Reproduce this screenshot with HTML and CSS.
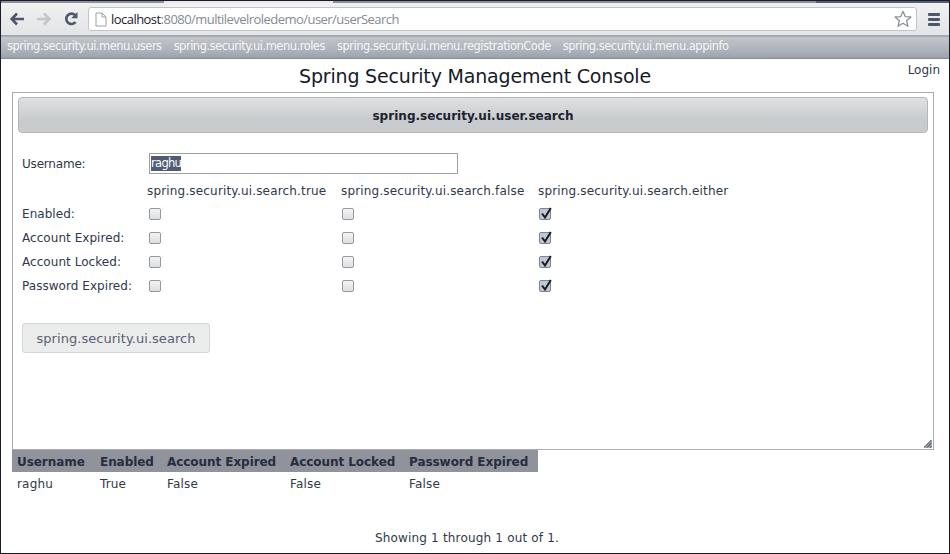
FILE: index.html
```html
<!DOCTYPE html>
<html lang="en">
<head>
<meta charset="utf-8">
<title>Spring Security Management Console</title>
<link rel="stylesheet" href="styles.css">
</head>
<body>
<div class="window">
  <div class="tabstrip"><span class="tab-a"></span><span class="tab-b"></span><span class="tab-c"></span></div>
  <div class="toolbar">
    <svg class="nav" width="76" height="18" viewBox="0 0 76 18" fill="none" stroke-width="2.6">
      <path d="M16 9H4M9 3.500L3.700 9l5.300 5.500" stroke="#4d566b"/>
      <path d="M29 9h12M36 3.500L41.300 9l-5.300 5.500" stroke="#c3c6c9"/>
      <path d="M67.500 12.200A5.200 5.200 0 1 1 67 5" stroke="#4d566b"/>
      <path d="M69.500 2v6.300h-6.300z" fill="#4d566b"/>
    </svg>
    <div class="address">
      <svg width="12" height="15" viewBox="0 0 12 15" fill="#fff" stroke="#9a9fa7"><path d="M1 1h6l4 4v9H1zM7 1v4h4"/></svg>
      <span class="url"><b>localhost</b>:8080/multilevelroledemo/user/userSearch</span>
      <svg class="star" width="18" height="18" viewBox="0 0 18 18" fill="#fff" stroke="#8b919b" stroke-width="1.300" stroke-linejoin="round"><path d="M9 1.300l2.200 5.300 5.700.4-4.300 3.700 1.400 5.600L9 13.300l-5 3 1.400-5.600L1.100 7l5.700-.4z"/></svg>
    </div>
    <div class="burger"><i></i><i></i><i></i></div>
  </div>
  <nav class="menu">
    <span>spring.security.ui.menu.users</span>
    <span>spring.security.ui.menu.roles</span>
    <span>spring.security.ui.menu.registrationCode</span>
    <span>spring.security.ui.menu.appinfo</span>
  </nav>
  <header class="heading">
    <h1>Spring Security Management Console</h1>
    <span class="login">Login</span>
  </header>
  <main class="panel">
    <h2>spring.security.ui.user.search</h2>
    <div class="form">
      <div class="row user"><label>Username:</label><div class="field"><span>raghu</span></div></div>
      <div class="row names"><span></span><span>spring.security.ui.search.true</span><span>spring.security.ui.search.false</span><span>spring.security.ui.search.either</span></div>
      <div class="row"><label>Enabled:</label><i class="box"></i><i class="box"></i><i class="box on"><svg width="14" height="14" viewBox="0 0 14 14"><path d="M3 6.500l3 4L11.800 1"/></svg></i></div>
      <div class="row"><label>Account Expired:</label><i class="box"></i><i class="box"></i><i class="box on"><svg width="14" height="14" viewBox="0 0 14 14"><path d="M3 6.500l3 4L11.800 1"/></svg></i></div>
      <div class="row"><label>Account Locked:</label><i class="box"></i><i class="box"></i><i class="box on"><svg width="14" height="14" viewBox="0 0 14 14"><path d="M3 6.500l3 4L11.800 1"/></svg></i></div>
      <div class="row"><label>Password Expired:</label><i class="box"></i><i class="box"></i><i class="box on"><svg width="14" height="14" viewBox="0 0 14 14"><path d="M3 6.500l3 4L11.800 1"/></svg></i></div>
    </div>
    <button class="search">spring.security.ui.search</button>
    <svg class="grip" width="8" height="8" viewBox="0 0 8 8"><path d="M0 8L8 0V8z" fill="#b4b8bf"/><path d="M0 7.500L7.500 0M3 7.500L7.500 3M6 7.500L7.500 6" stroke="#596070" stroke-width="1.100"/></svg>
  </main>
  <div class="results">
    <div class="cols head"><span>Username</span><span>Enabled</span><span>Account Expired</span><span>Account Locked</span><span>Password Expired</span></div>
    <div class="cols"><span>raghu</span><span>True</span><span>False</span><span>False</span><span>False</span></div>
  </div>
  <footer>Showing 1 through 1 out of 1.</footer>
</div>
</body>
</html>
```
FILE: styles.css
```css
* { box-sizing: border-box; }
body {
  margin: 0;
  font: 12px/16px "DejaVu Sans", Verdana, sans-serif;
  letter-spacing: .17px;
  color: #30384a;
  background: #fff;
}
svg { display: block; flex: none; }
.window {
  height: 554px;
  border: 1px solid #1b1c2a;
  display: flex;
  flex-direction: column;
  overflow: hidden;
}
.tabstrip { height: 2px; display: flex; flex: none; background: #8c909a; }
.tab-a { width: 163px; background: #8c909a; }
.tab-b { width: 169px; background: #e9e9eb; }
.tab-c { margin-left: auto; width: 133px; background: #565d75; }
.toolbar {
  height: 32px;
  flex: none;
  display: flex;
  align-items: center;
  background: linear-gradient(#f1f1f2, #e3e4e5);
}
.nav { margin-left: 7px; }
.address {
  margin-left: 4px;
  width: 829px;
  height: 24px;
  display: flex;
  align-items: center;
  padding: 0 4px 0 6px;
  border: 1px solid #c2c5c8;
  border-radius: 3px;
  background: #fff;
}
.url {
  margin-left: 4px;
  font: 13px/18px "Open Sans", sans-serif;
  letter-spacing: -.54px;
  color: #858a94;
  white-space: nowrap;
}
.url b { font-weight: 400; color: #1c2130; }
.star { margin-left: auto; }
.burger { margin-left: 11px; display: flex; flex-direction: column; gap: 2px; }
.burger i { width: 12px; height: 3px; border-radius: 1px; background: #4f576c; }
.menu {
  height: 24px;
  flex: none;
  display: flex;
  gap: 12px;
  padding: 1px 6px 0;
  border-top: 2px solid #a4a9b1;
  border-bottom: 1px solid #858a93;
  background: linear-gradient(#c3c6ca, #aab0b9 70%, #9ca1aa);
  color: #f6f6f6;
  font-size: 11.5px;
  letter-spacing: -.5px;
  white-space: nowrap;
}
.heading {
  height: 33px;
  flex: none;
  display: grid;
  grid-template-columns: 1fr auto 1fr;
}
h1 {
  grid-column: 2;
  margin: 5px 0 0;
  font-size: 19px;
  line-height: 24px;
  font-weight: 400;
  letter-spacing: -.18px;
  color: #151a28;
}
.login { justify-self: end; margin: 3px 9px 0 0; letter-spacing: 0; }
.panel {
  width: 922px;
  height: 358px;
  flex: none;
  margin-left: 11px;
  padding: 4px;
  border: 1px solid #a9adb3;
  display: flex;
  flex-direction: column;
}
h2 {
  height: 36px;
  margin: 0 1px;
  flex: none;
  border: 1px solid #b4b8bc;
  border-radius: 4px;
  background: linear-gradient(#dfe0e1, #c8cbcd 65%, #caccce);
  font-size: 12px;
  line-height: 36px;
  letter-spacing: .03px;
  text-align: center;
  color: #1c2230;
}
.form { margin: 17px 0 0 5px; }
.row {
  display: grid;
  grid-template-columns: 125px 194px 197px 197px;
  align-items: center;
  height: 24px;
  white-space: nowrap;
}
.row.user { grid-template-columns: 127px 309px; height: 26px; }
.row.names { height: 26px; padding-top: 3px; }
.row label { letter-spacing: .05px; }
.row.user label { padding-top: 2px; letter-spacing: -.2px; }
.field { height: 21px; border: 1px solid #9ba1ab; padding: 2px 1px; line-height: 15px; }
.field span { display: inline-block; background: #515c73; color: #fff; font-size: 11.5px; letter-spacing: -.7px; }
.box {
  width: 12px;
  height: 12px;
  margin-left: 2px;
  border: 1px solid #9398a1;
  border-radius: 2px;
  background: linear-gradient(#f3f3f3, #dedfe0);
}
.row .box:nth-child(n+3) { margin-left: 1px; }
.box.on { background: #c3c8d0; border-color: #7d8492; }
.box.on svg { margin: -2px 0 0 -1px; }
.box path { fill: none; stroke: #151b2b; stroke-width: 2; }
.search {
  width: 188px;
  height: 30px;
  flex: none;
  margin: 25px 0 0 5px;
  padding: 2px 0 0;
  border: 1px solid #d4d6d8;
  border-radius: 3px;
  background: #ebecec;
  color: #596172;
  font: 13px/26px "DejaVu Sans", Verdana, sans-serif;
  letter-spacing: .04px;
}
.grip { margin: auto -3px -3px auto; }
.results { margin-left: 11px; width: 526px; flex: none; }
.cols {
  display: grid;
  grid-template-columns: 83px 67px 123px 119px 129px;
  padding-left: 5px;
  height: 22px;
  line-height: 24px;
  white-space: nowrap;
}
.cols.head { background: #90939b; font-weight: 700; letter-spacing: -.06px; color: #252d40; }
footer { margin: auto auto 7px; padding-right: 16px; letter-spacing: .18px; }
```
